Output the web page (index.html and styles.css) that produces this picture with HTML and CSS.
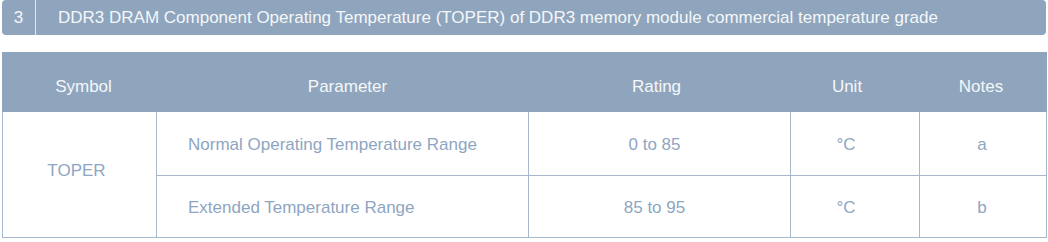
FILE: index.html
```html
<!DOCTYPE html>
<html>
<head>
<meta charset="utf-8">
<link rel="stylesheet" href="styles.css">
</head>
<body>
<div class="page">
  <div class="title-bar">
    <div class="title-num">3</div>
    <div class="title-text">DDR3 DRAM Component Operating Temperature (TOPER) of DDR3 memory module commercial temperature grade</div>
  </div>
  <table class="spec">
    <colgroup>
      <col class="c1"><col class="c2"><col class="c3"><col class="c4"><col class="c5">
    </colgroup>
    <thead>
      <tr>
        <th class="h-sym">Symbol</th>
        <th class="h-param">Parameter</th>
        <th class="h-rating">Rating</th>
        <th class="h-unit">Unit</th>
        <th class="h-notes">Notes</th>
      </tr>
    </thead>
    <tbody>
      <tr class="r1">
        <td rowspan="2" class="sym">TOPER</td>
        <td class="param">Normal Operating Temperature Range</td>
        <td class="rating">0 to 85</td>
        <td class="unit">°C</td>
        <td class="notes">a</td>
      </tr>
      <tr class="r2">
        <td class="param">Extended Temperature Range</td>
        <td class="rating">85 to 95</td>
        <td class="unit">°C</td>
        <td class="notes">b</td>
      </tr>
    </tbody>
  </table>
</div>
</body>
</html>
```

FILE: styles.css
```css
html, body {
  margin: 0;
  padding: 0;
  background: #ffffff;
}
body {
  font-family: "Liberation Sans", Arial, sans-serif;
}
.page {
  padding: 0 2px;
}
.title-bar {
  display: flex;
  align-items: stretch;
  height: 35px;
  background: #8fa5bd;
  border-radius: 4px;
  color: #f4f7fa;
  font-size: 17px;
}
.title-num {
  width: 33px;
  display: flex;
  align-items: center;
  justify-content: center;
  border-right: 1px solid #e3e9f0;
}
.title-text {
  display: flex;
  align-items: center;
  padding-left: 22px;
}
.spec {
  margin-top: 17px;
  width: 1044px;
  border-collapse: collapse;
  table-layout: fixed;
  font-size: 17px;
}
.c1 { width: 154px; }
.c2 { width: 372px; }
.c3 { width: 262px; }
.c4 { width: 129px; }
.c5 { width: 127px; }
.spec th {
  background: #8fa5bd;
  color: #f4f7fa;
  font-weight: normal;
  height: 59px;
  padding: 9px 0 0 0;
  box-sizing: border-box;
  border: 1px solid #8fa5bd;
}
.spec th.h-sym { padding-left: 8px; }
.spec th.h-param { padding-left: 10px; }
.spec th.h-rating { padding-right: 6px; }
.spec th.h-unit { padding-right: 16px; }
.spec th.h-notes { padding-right: 4px; }
.spec td {
  border: 1.5px solid #a7b8cc;
  color: #8ea6c2;
  text-align: center;
  padding: 0;
  box-sizing: border-box;
}
.spec td.param {
  text-align: left;
  padding-left: 31px;
}
.spec .r1 td { height: 64px; padding-top: 3px; }
.spec .r2 td { height: 62px; padding-top: 3px; }
.spec td.sym { padding-top: 0; padding-bottom: 8px; padding-right: 6px; }
.spec td.rating { padding-right: 10px; }
.spec td.unit { padding-right: 18px; }
.spec td.notes { padding-right: 2px; }
```
